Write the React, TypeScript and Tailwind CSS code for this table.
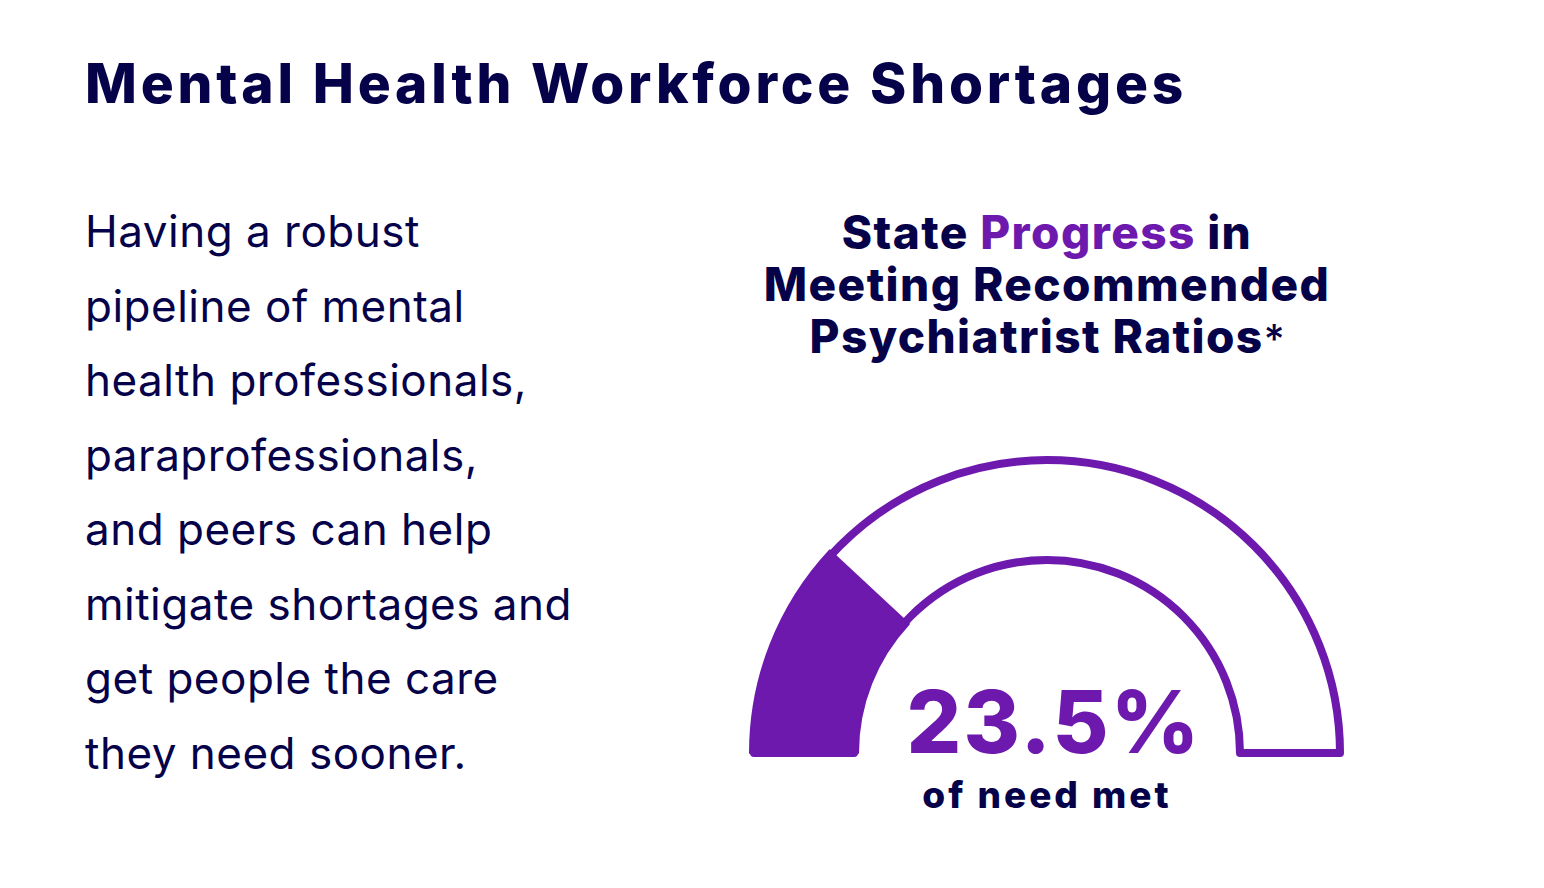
import React from "react";

const NAVY = "text-[#06024a]";

export default function App() {
  const lines = [
    "Having a robust",
    "pipeline of mental",
    "health professionals,",
    "paraprofessionals,",
    "and peers can help",
    "mitigate shortages and",
    "get people the care",
    "they need sooner.",
  ];
  return (
    <div className="relative w-[1544px] h-[888px] bg-white overflow-hidden font-['Inter',sans-serif]">
      <div className="pt-[56px] pl-[85px]">
        <h1 className={`text-[55px] leading-none font-extrabold ${NAVY} tracking-[3.8px] whitespace-nowrap`}>
          Mental Health Workforce Shortages
        </h1>
      </div>
      <div className="flex">
        <div className="w-[743px] shrink-0 pl-[85px] mt-[83px]">
          {lines.map((l) => (
            <div key={l} className={`text-[44px] leading-[74.5px] font-normal tracking-[0.5px] ${NAVY} whitespace-nowrap`}>
              {l}
            </div>
          ))}
        </div>
        <div className="w-[608px] shrink-0 flex flex-col items-center">
          <div className={`mt-[95px] text-center text-[46px] leading-[52px] font-extrabold tracking-[1.4px] ${NAVY} whitespace-nowrap`}>
            <div className="h-[52px]">
              State <span className="text-[#6d19ad]">Progress</span> in
            </div>
            <div className="h-[52px]">Meeting Recommended</div>
            <div className="h-[52px]">
              Psychiatrist Ratios<span className="font-medium text-[40px] leading-none tracking-normal">*</span>
            </div>
          </div>
          <div className="relative w-[608px] h-[312px] mt-[88px]">
            <svg width="608" height="312" viewBox="0 0 608 312" className="block">
              <path
                d="M 11 303 A 293 293 0 0 1 597 303 L 497 303 A 193 193 0 0 0 111 303 Z"
                fill="none"
                stroke="#6d19ad"
                strokeWidth="8"
                strokeLinejoin="round"
              />
              <path
                d="M 7 303 A 297 297 0 0 1 86.8 100.4 L 165.8 174.1 A 189 189 0 0 0 115 303 Z"
                fill="#6d19ad"
                stroke="#6d19ad"
                strokeWidth="2"
                strokeLinejoin="round"
              />
            </svg>
            <div className="absolute left-0 right-0 top-[229px] text-center text-[86px] leading-none font-extrabold tracking-[2.2px] text-[#6d19ad] pl-[14px] whitespace-nowrap">
              23.5%
            </div>
            <div className={`absolute left-0 right-0 top-[326px] text-center text-[37px] leading-none font-extrabold tracking-[3px] ${NAVY} whitespace-nowrap`}>
              of need met
            </div>
          </div>
        </div>
      </div>
    </div>
  );
}
